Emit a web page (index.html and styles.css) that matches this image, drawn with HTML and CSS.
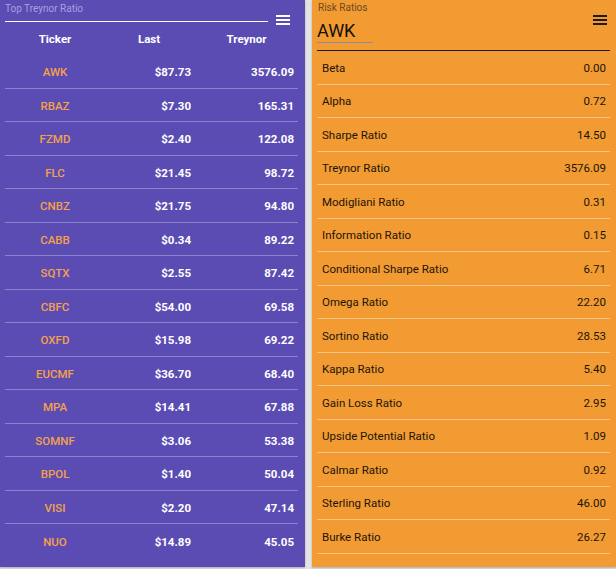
FILE: index.html
```html
<!DOCTYPE html>
<html>
<head>
<meta charset="utf-8">
<link rel="stylesheet" href="styles.css">
</head>
<body>
<div class="app">
  <section class="panel purple">
    <div class="ptop">
      <div class="field">
        <div class="flabel">Top Treynor Ratio</div>
      </div>
      <span class="menu light">
        <svg width="14" height="10" viewBox="0 0 14 10"><rect x="0" y="0" width="14" height="2"/><rect x="0" y="4" width="14" height="2"/><rect x="0" y="8" width="14" height="2"/></svg>
      </span>
    </div>
    <div class="grid head">
      <div class="c1">Ticker</div><div class="c2">Last</div><div class="c3">Treynor</div>
    </div>
    <div class="grid row"><div class="c1 tk">AWK</div><div class="c2 num">$87.73</div><div class="c3 num">3576.09</div></div>
    <div class="grid row"><div class="c1 tk">RBAZ</div><div class="c2 num">$7.30</div><div class="c3 num">165.31</div></div>
    <div class="grid row"><div class="c1 tk">FZMD</div><div class="c2 num">$2.40</div><div class="c3 num">122.08</div></div>
    <div class="grid row"><div class="c1 tk">FLC</div><div class="c2 num">$21.45</div><div class="c3 num">98.72</div></div>
    <div class="grid row"><div class="c1 tk">CNBZ</div><div class="c2 num">$21.75</div><div class="c3 num">94.80</div></div>
    <div class="grid row"><div class="c1 tk">CABB</div><div class="c2 num">$0.34</div><div class="c3 num">89.22</div></div>
    <div class="grid row"><div class="c1 tk">SQTX</div><div class="c2 num">$2.55</div><div class="c3 num">87.42</div></div>
    <div class="grid row"><div class="c1 tk">CBFC</div><div class="c2 num">$54.00</div><div class="c3 num">69.58</div></div>
    <div class="grid row"><div class="c1 tk">OXFD</div><div class="c2 num">$15.98</div><div class="c3 num">69.22</div></div>
    <div class="grid row"><div class="c1 tk">EUCMF</div><div class="c2 num">$36.70</div><div class="c3 num">68.40</div></div>
    <div class="grid row"><div class="c1 tk">MPA</div><div class="c2 num">$14.41</div><div class="c3 num">67.88</div></div>
    <div class="grid row"><div class="c1 tk">SOMNF</div><div class="c2 num">$3.06</div><div class="c3 num">53.38</div></div>
    <div class="grid row"><div class="c1 tk">BPOL</div><div class="c2 num">$1.40</div><div class="c3 num">50.04</div></div>
    <div class="grid row"><div class="c1 tk">VISI</div><div class="c2 num">$2.20</div><div class="c3 num">47.14</div></div>
    <div class="grid row last"><div class="c1 tk">NUO</div><div class="c2 num">$14.89</div><div class="c3 num">45.05</div></div>
  </section>

  <section class="panel orange">
    <div class="otop">
      <div class="ofield">
        <div class="olabel">Risk Ratios</div>
        <div class="oinput">AWK</div>
      </div>
      <span class="menu dark">
        <svg width="14" height="10" viewBox="0 0 14 10"><rect x="0" y="0" width="14" height="2"/><rect x="0" y="4" width="14" height="2"/><rect x="0" y="8" width="14" height="2"/></svg>
      </span>
    </div>
    <div class="list">
      <div class="item"><span>Beta</span><span>0.00</span></div>
      <div class="item"><span>Alpha</span><span>0.72</span></div>
      <div class="item"><span>Sharpe Ratio</span><span>14.50</span></div>
      <div class="item"><span>Treynor Ratio</span><span>3576.09</span></div>
      <div class="item"><span>Modigliani Ratio</span><span>0.31</span></div>
      <div class="item"><span>Information Ratio</span><span>0.15</span></div>
      <div class="item"><span>Conditional Sharpe Ratio</span><span>6.71</span></div>
      <div class="item"><span>Omega Ratio</span><span>22.20</span></div>
      <div class="item"><span>Sortino Ratio</span><span>28.53</span></div>
      <div class="item"><span>Kappa Ratio</span><span>5.40</span></div>
      <div class="item"><span>Gain Loss Ratio</span><span>2.95</span></div>
      <div class="item"><span>Upside Potential Ratio</span><span>1.09</span></div>
      <div class="item"><span>Calmar Ratio</span><span>0.92</span></div>
      <div class="item"><span>Sterling Ratio</span><span>46.00</span></div>
      <div class="item"><span>Burke Ratio</span><span>26.27</span></div>
    </div>
  </section>
</div>
</body>
</html>
```

FILE: styles.css
```css
* { box-sizing: border-box; }
html, body {
  margin: 0;
  padding: 0;
  background: #e4e4e4;
  font-family: Roboto, "Liberation Sans", Arial, sans-serif;
}
.app {
  display: flex;
  gap: 7px;
  width: 616px;
  height: 569px;
}
.panel {
  height: 567px;
  box-shadow: 0 1px 2px rgba(0,0,0,0.25);
}
.purple {
  width: 305px;
  background: #5b4cb3;
  padding: 0 7px 0 5px;
  color: #fff;
}
.orange {
  width: 304px;
  background: #f29b33;
  padding: 0 6px 0 5px;
  color: #1c1408;
}

/* left header */
.ptop {
  display: flex;
  align-items: flex-start;
  height: 22px;
}
.field {
  width: 263px;
  height: 22px;
  border-bottom: 1px solid #ffffff;
}
.flabel {
  font-size: 10px;
  line-height: 17px;
  color: #a99fe0;
}
.menu {
  display: block;
  line-height: 0;
  margin-top: 15px;
}
.menu.light { margin-left: 8px; fill: #ffffff; }
.menu.dark { margin-left: auto; margin-right: 3px; fill: #1e1a14; }

/* left table */
.grid {
  display: grid;
  grid-template-columns: 100px 94px 99px;
  align-items: center;
  font-size: 11.5px;
  font-weight: 700;
}
.head {
  height: 33px;
  text-align: center;
}
.head .c2 { padding-right: 6px; }
.head .c3 { padding-right: 4px; }
.row {
  height: 33.5px;
  padding-top: 2px;
  border-bottom: 1px solid #8d82cc;
}
.row.last { border-bottom: none; }
.c1 { text-align: center; }
.num { text-align: right; padding-right: 4px; }
.c2.num { padding-right: 8px; }
.tk {
  color: #f5a14c;
  font-weight: 500;
}

/* right header */
.otop {
  display: flex;
  align-items: flex-start;
  height: 51px;
  border-bottom: 1px solid #1e1a14;
}
.ofield {
  padding-left: 1px;
}
.olabel {
  font-size: 10px;
  line-height: 16px;
  color: #6c4a1c;
}
.oinput {
  width: 56px;
  height: 27px;
  padding-top: 3px;
  font-size: 18px;
  line-height: 23px;
  color: #16110a;
  border-bottom: 1px solid #8c8f9a;
  margin-left: -1px;
}

/* right list */
.item {
  display: flex;
  justify-content: space-between;
  align-items: center;
  height: 33.5px;
  padding: 1px 4px 0 5px;
  font-size: 11.5px;
  border-bottom: 1px solid #f6c489;
}
```
